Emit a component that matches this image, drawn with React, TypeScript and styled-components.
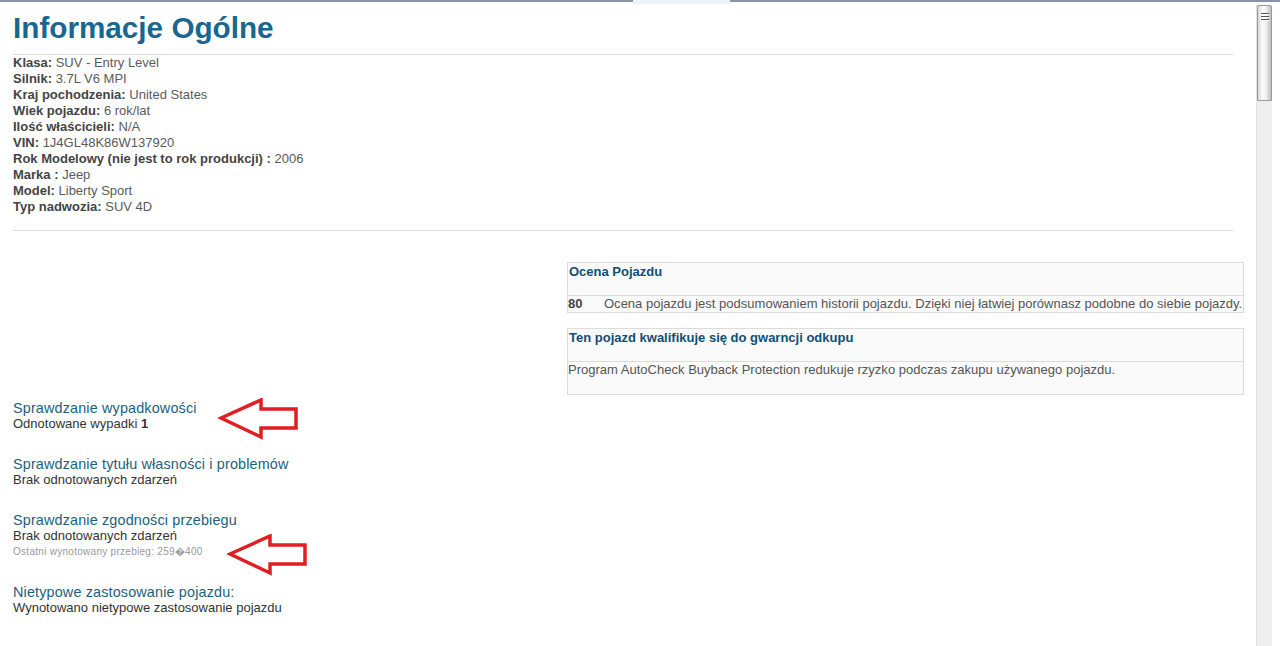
import styled, { createGlobalStyle } from 'styled-components';

const GlobalStyle = createGlobalStyle`
  html, body {
    margin: 0;
    padding: 0;
    background: #ffffff;
    overflow: hidden;
  }
  body {
    font-family: 'Liberation Sans', Arial, sans-serif;
  }
`;

const Frame = styled.div`
  width: 1280px;
  height: 646px;
  display: flex;
  flex-direction: column;
  overflow: hidden;
`;

const TopStrip = styled.div`
  display: flex;
  height: 3px;
  flex-shrink: 0;
`;

const StripLine = styled.div<{ $w?: number }>`
  ${({ $w }) => ($w ? `width: ${$w}px;` : 'flex: 1;')}
  height: 2px;
  background: #8891a3;
`;

const StripTab = styled.div`
  width: 97px;
  height: 4px;
  background: #eef3f8;
`;

const Body = styled.div`
  display: flex;
  flex: 1;
  min-height: 0;
`;

const Content = styled.main`
  width: 1256px;
  padding-left: 13px;
  box-sizing: border-box;
`;

const Title = styled.h1`
  margin: 8px 0 0;
  font-size: 29.7px;
  line-height: 34px;
  font-weight: bold;
  color: #19678e;
`;

const Rule = styled.hr<{ $top: number }>`
  width: 1220px;
  margin: ${({ $top }) => $top}px 0 0;
  border: 0;
  border-top: 1px solid #dcdcdc;
  height: 0;
`;

const InfoList = styled.ul`
  list-style: none;
  margin: 0;
  padding: 0;
  font-size: 13px;
  line-height: 16px;
  color: #5a5a5a;
`;

const InfoLabel = styled.b`
  color: #444444;
`;

const Panels = styled.div`
  display: flex;
  flex-direction: column;
  align-items: flex-end;
  gap: 15px;
  width: 1231px;
  margin-top: 31px;
`;

const Panel = styled.table`
  width: 677px;
  border-collapse: collapse;
  background: #fafafa;
  border: 1px solid #dcdcdc;
  font-size: 13px;
  color: #555555;
`;

const PanelHead = styled.th`
  height: 33px;
  padding: 1px 1px 0;
  box-sizing: border-box;
  text-align: left;
  vertical-align: top;
  font-size: 13px;
  line-height: 16px;
  color: #0e4f77;
  border-bottom: 1px solid #dcdcdc;
`;

const PanelCell = styled.td<{ $tall?: boolean }>`
  height: ${({ $tall }) => ($tall ? '33px' : '16px')};
  padding: 0;
  box-sizing: border-box;
  line-height: 16px;
  vertical-align: top;
  white-space: nowrap;
  letter-spacing: 0.01px;
`;

const Score = styled.td`
  width: 36px;
  padding: 0;
  line-height: 16px;
  font-weight: bold;
  color: #444444;
  vertical-align: top;
`;

const Checks = styled.div`
  margin-top: 5px;
`;

const Check = styled.section`
  position: relative;
  margin-bottom: 24px;
`;

const CheckTitle = styled.a`
  display: block;
  font-size: 14.4px;
  line-height: 16px;
  color: #1d5f7b;
  text-decoration: none;
  letter-spacing: 0.15px;
`;

const CheckText = styled.div`
  font-size: 13px;
  line-height: 16px;
  color: #333333;
`;

const CheckNote = styled.div`
  font-size: 10px;
  line-height: 16px;
  color: #999999;
  letter-spacing: 0.28px;
`;

const ArrowMark = styled.svg<{ $left: number; $top: number }>`
  position: absolute;
  left: ${({ $left }) => $left}px;
  top: ${({ $top }) => $top}px;
`;

const Scrollbar = styled.div`
  width: 16px;
  margin: 2px 8px 0 0;
  background: #efefef;
  border-left: 1px solid #e2e2e2;
  box-sizing: border-box;
  display: flex;
  flex-direction: column;
`;

const Thumb = styled.div`
  height: 96px;
  border: 1px solid #9a9a9a;
  border-radius: 2px 2px 0 0;
  background: linear-gradient(90deg, #d8d8d8 0%, #fafafa 35%, #f2f2f2 60%, #bdbdbd 100%);
  display: flex;
  flex-direction: column;
  align-items: center;
  gap: 2px;
  padding-top: 7px;
  box-sizing: border-box;
`;

const Grip = styled.span`
  width: 8px;
  height: 1px;
  background: #555555;
  box-shadow: 0 1px 0 #ffffff;
`;

const Arrow = ({ left, top }: { left: number; top: number }) => (
  <ArrowMark $left={left} $top={top} width="82" height="42" viewBox="0 0 82 42">
    <polygon
      points="3,20 43,2 43,11 78,11 78,30 43,30 43,39"
      fill="#ffffff"
      stroke="#e01e24"
      strokeWidth="3.5"
      strokeLinejoin="miter"
    />
  </ArrowMark>
);

const info: [string, string][] = [
  ['Klasa:', 'SUV - Entry Level'],
  ['Silnik:', '3.7L V6 MPI'],
  ['Kraj pochodzenia:', 'United States'],
  ['Wiek pojazdu:', '6 rok/lat'],
  ['Ilość właścicieli:', 'N/A'],
  ['VIN:', '1J4GL48K86W137920'],
  ['Rok Modelowy (nie jest to rok produkcji) :', '2006'],
  ['Marka :', 'Jeep'],
  ['Model:', 'Liberty Sport'],
  ['Typ nadwozia:', 'SUV 4D'],
];

export default function App() {
  return (
    <Frame>
      <GlobalStyle />
      <TopStrip>
        <StripLine $w={633} />
        <StripTab />
        <StripLine />
      </TopStrip>
      <Body>
        <Content>
          <Title>Informacje Ogólne</Title>
          <Rule $top={9} />
          <InfoList>
            {info.map(([label, value]) => (
              <li key={label}>
                <InfoLabel>{label}</InfoLabel> {value}
              </li>
            ))}
          </InfoList>
          <Rule $top={15} />

          <Panels>
            <Panel>
              <thead>
                <tr>
                  <PanelHead colSpan={2}>Ocena Pojazdu</PanelHead>
                </tr>
              </thead>
              <tbody>
                <tr>
                  <Score>80</Score>
                  <PanelCell>
                    Ocena pojazdu jest podsumowaniem historii pojazdu. Dzięki niej łatwiej porównasz podobne do siebie pojazdy.
                  </PanelCell>
                </tr>
              </tbody>
            </Panel>
            <Panel>
              <thead>
                <tr>
                  <PanelHead>Ten pojazd kwalifikuje się do gwarncji odkupu</PanelHead>
                </tr>
              </thead>
              <tbody>
                <tr>
                  <PanelCell $tall>
                    Program AutoCheck Buyback Protection redukuje rzyzko podczas zakupu używanego pojazdu.
                  </PanelCell>
                </tr>
              </tbody>
            </Panel>
          </Panels>

          <Checks>
            <Check>
              <CheckTitle href="#">Sprawdzanie wypadkowości</CheckTitle>
              <CheckText>
                Odnotowane wypadki <b>1</b>
              </CheckText>
              <Arrow left={205} top={-2} />
            </Check>
            <Check>
              <CheckTitle href="#">Sprawdzanie tytułu własności i problemów</CheckTitle>
              <CheckText>Brak odnotowanych zdarzeń</CheckText>
            </Check>
            <Check>
              <CheckTitle href="#">Sprawdzanie zgodności przebiegu</CheckTitle>
              <CheckText>Brak odnotowanych zdarzeń</CheckText>
              <CheckNote>Ostatni wynotowany przebieg: 259{'\uFFFD'}400</CheckNote>
              <Arrow left={214} top={22} />
            </Check>
            <Check>
              <CheckTitle href="#">Nietypowe zastosowanie pojazdu:</CheckTitle>
              <CheckText>Wynotowano nietypowe zastosowanie pojazdu</CheckText>
            </Check>
          </Checks>
        </Content>
        <Scrollbar>
          <Thumb>
            <Grip />
            <Grip />
            <Grip />
          </Thumb>
        </Scrollbar>
      </Body>
    </Frame>
  );
}
